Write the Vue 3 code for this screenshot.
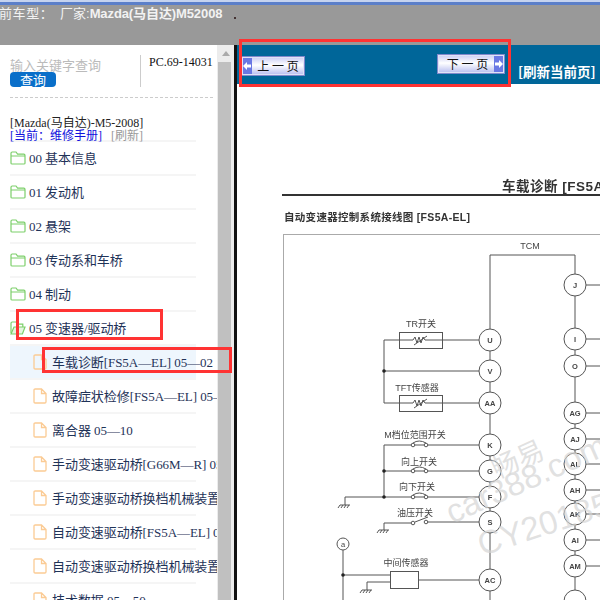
<script setup>
const tree = [
  { name: '00 基本信息', type: 'folder' },
  { name: '01 发动机', type: 'folder' },
  { name: '02 悬架', type: 'folder' },
  { name: '03 传动系和车桥', type: 'folder' },
  { name: '04 制动', type: 'folder' },
  { name: '05 变速器/驱动桥', type: 'open' },
  { name: '车载诊断[FS5A—EL] 05—02', type: 'file', active: true },
  { name: '故障症状检修[FS5A—EL] 05—03', type: 'file' },
  { name: '离合器 05—10', type: 'file' },
  { name: '手动变速驱动桥[G66M—R] 05—11', type: 'file' },
  { name: '手动变速驱动桥换档机械装置 05—15', type: 'file' },
  { name: '自动变速驱动桥[FS5A—EL] 05—17', type: 'file' },
  { name: '自动变速驱动桥换档机械装置 05—18', type: 'file' },
  { name: '技术数据 05—50', type: 'file' }
]

// 接线图的端子，坐标就是图上的位置
const pins = [
  ['J', 575, 285], ['I', 575, 339], ['O', 575, 366], ['AG', 575, 413], ['AJ', 575, 439],
  ['AL', 575, 464], ['AH', 575, 490], ['AK', 575, 514], ['AI', 575, 540], ['AM', 575, 566],
  ['', 575, 601],
  ['U', 490, 340], ['V', 490, 371], ['AA', 490, 403], ['K', 490, 445], ['G', 490, 471],
  ['F', 490, 497], ['S', 490, 522], ['AC', 490, 580]
]
const rightStubs = [285, 339, 366, 413, 439, 464, 490, 514, 540, 566]
const labels = [
  ['TCM', 530, 249], ['TR开关', 421, 327], ['TFT传感器', 417, 391], ['M档位范围开关', 415, 438],
  ['向上开关', 419, 465], ['向下开关', 417, 490], ['油压开关', 415, 516], ['中间传感器', 406, 566]
]
const nodes = [[384, 371], [384, 471], [384, 497], [343, 575]]
const grounds = [[345, 505], [384, 530], [367, 590]]
const contacts = [[413, 445], [426, 445], [413, 471], [426, 471], [413, 497], [426, 497], [413, 523], [426, 522]]
</script>

<template>
  <div class="page">
    <div class="top-bar">
      <span class="car-label">前车型：</span>
      <span class="car-maker">厂家:</span><b class="car-name">Mazda(马自达)M52008</b>
      <i class="top-dot"></i>
    </div>

    <div class="body">
      <aside class="side">
        <div class="search">
          <div class="search-left">
            <div class="search-hint">输入关键字查询</div>
            <button class="search-btn">查询</button>
          </div>
          <div class="pc-code">PC.69-14031</div>
        </div>
        <div class="car-title">[Mazda(马自达)-M5-2008]</div>
        <div class="crumb">
          <span class="crumb-now">[当前：维修手册]</span>
          <span class="crumb-refresh">[刷新]</span>
        </div>
        <ul class="tree">
          <li v-for="item in tree" :key="item.name" :class="['row', { sub: item.type === 'file', active: item.active }]">
            <svg v-if="item.type === 'folder'" class="ico-folder" viewBox="0 0 16 14">
              <path d="M1 12.2V2.2Q1 1 2.2 1H6l1.6 2.2h6.2Q15 3.2 15 4.4v7.8Q15 13 13.8 13H2.2Q1 13 1 12.2ZM1 5h14" />
            </svg>
            <svg v-else-if="item.type === 'open'" class="ico-folder" viewBox="0 0 16 14">
              <path d="M1 12V2.2Q1 1 2.2 1H6l1.6 2.2h5.2V6" />
              <path class="open-front" d="M1 13 4 6h11l-2.6 7Z" />
            </svg>
            <svg v-else class="ico-file" viewBox="0 0 14 16">
              <path d="M1 2.2Q1 1 2.2 1H8.5L13 5.5v8.3Q13 15 11.8 15H2.2Q1 15 1 13.8ZM8.5 1v4.5H13" />
            </svg>
            <span class="row-text">{{ item.name }}</span>
          </li>
        </ul>
      </aside>

      <div class="scrollbar">
        <i class="scroll-arrow"></i>
        <i class="scroll-thumb"></i>
      </div>

      <main class="main">
        <div class="nav">
          <button class="page-btn prev">
            <span class="cap"><svg viewBox="0 0 8 10"><path d="M0 5 4 1v2.4h4v3.2H4V9Z" /></svg></span>
            <span class="page-text">上 一 页</span>
          </button>
          <button class="page-btn next">
            <span class="page-text">下 一 页</span>
            <span class="cap"><svg viewBox="0 0 8 10"><path d="M8 5 4 1v2.4H0v3.2h4V9Z" /></svg></span>
          </button>
          <span class="reload">[刷新当前页]</span>
        </div>

        <svg class="sheet" viewBox="237 84 363 516">
          <g class="blurred">
            <text x="502" y="191" class="sheet-title">车载诊断 [FS5A-EL]</text>
            <rect x="282" y="194" width="330" height="2" fill="#333" />
            <text x="284" y="221" class="sheet-sub">自动变速器控制系统接线图 [FS5A-EL]</text>
            <rect x="283.5" y="234.5" width="340" height="400" fill="none" stroke="#aaa" />

            <g fill="none" stroke="#555">
              <path d="M490 329V255H575V600M490 340V600" />
              <path d="M479 340H384V403H479M384 371H479" />
              <path d="M479 445H384V497M384 471H479M345 497H479M345 497V505" />
              <path d="M479 522H426M413 523H384V530" />
              <path d="M343 550V600M343 575H390M390 582H367V590M418 580H479" />
              <path v-for="y in rightStubs" :key="y" :d="`M586 ${y}H600`" />
              <rect x="399.5" y="332.5" width="43" height="16" fill="#fff" />
              <rect x="399.5" y="395.5" width="43" height="16" fill="#fff" />
              <path d="M399 340H413l2-3 2 6 2-6 2 6 2-6 2 3H443M414 345l13-9M399 403H413l2-3 2 6 2-6 2 6 2-6 2 3H443M414 408l13-9" />
              <rect x="390.5" y="571.5" width="28" height="17" fill="#fff" />
              <path d="M413 443Q419 439 426 443M413 469Q419 465 426 469M413 495Q419 491 426 495M415 522 428 517" />
              <circle cx="343" cy="544" r="6" fill="#fff" />
              <path v-for="g in grounds" :key="g[0]" :d="`M${g[0] - 5} ${g[1]}h10m-10 0-2 3m5-3-2 3m5-3-2 3m5-3-2 3`" />
            </g>

            <circle v-for="c in contacts" :key="`${c[0]}-${c[1]}`" :cx="c[0]" :cy="c[1]" r="1.8" fill="#fff" stroke="#555" />
            <circle v-for="n in nodes" :key="`${n[0]}-${n[1]}`" :cx="n[0]" :cy="n[1]" r="1.8" fill="#222" />

            <g v-for="p in pins" :key="`${p[0]}-${p[2]}`">
              <circle :cx="p[1]" :cy="p[2]" r="11" fill="#fff" stroke="#555" />
              <text :x="p[1]" :y="p[2] + 3" class="pin">{{ p[0] }}</text>
            </g>
            <text x="343" y="547" class="pin small">a</text>
            <text v-for="l in labels" :key="l[0]" :x="l[1]" :y="l[2]" class="wire-label">{{ l[0] }}</text>
          </g>

          <g class="mark">
            <text transform="translate(497 479) rotate(-24)" class="mark-cn">畅易</text>
            <text transform="translate(452 524) rotate(-24)">car388.com</text>
            <text transform="translate(482 556) rotate(-18)">CY20185</text>
          </g>
        </svg>
      </main>
    </div>

    <i class="flag flag-nav"></i>
    <i class="flag flag-group"></i>
    <i class="flag flag-item"></i>
  </div>
</template>

<style>
html, body { margin: 0; background: #fff; }
</style>

<style scoped>
.page {
  position: relative;
  width: 600px;
  height: 600px;
  overflow: hidden;
  display: flex;
  flex-direction: column;
  font-family: "Liberation Serif", "Noto Sans CJK SC", serif;
}

.top-bar {
  flex: none;
  background: #999;
  border-top: 2px solid #c5d3ef;
  box-shadow: inset 0 3px 0 #5b7fc9;
  height: 43px;
  display: flex;
  align-items: flex-start;
  color: #f2f2f2;
  font-family: "Liberation Sans", "Noto Sans CJK SC", sans-serif;
  font-size: 13px;
  line-height: 24px;
  white-space: nowrap;
}
.car-label { margin-left: -1px; width: 61px; letter-spacing: 0.6px; }
.car-name { letter-spacing: -0.1px; font-weight: 600; }
.top-dot { width: 2px; height: 2px; background: #433; margin: 15px 0 0 12px; }

.body { flex: 1; display: flex; min-height: 0; }

.side { width: 217px; flex: none; overflow: hidden; background: #fff; }
.search {
  margin: 10px 4px 0 10px;
  padding-bottom: 10px;
  height: 32px;
  display: flex;
  border-bottom: 1px dashed #ccc;
}
.search-left { width: 130px; border-right: 1px solid #ccc; }
.search-hint {
  margin-top: 2px;
  color: #bbb;
  font-size: 13px;
  line-height: 15px;
  font-family: "Noto Sans CJK SC", sans-serif;
}
.search-btn {
  display: block;
  width: 46px;
  height: 15px;
  padding: 0;
  border: none;
  border-radius: 4px;
  background: #0a6fc9;
  color: #fff;
  font-family: "Noto Sans CJK SC", sans-serif;
  font-size: 13px;
  line-height: 15px;
}
.pc-code { margin-left: 8px; font-size: 12px; line-height: 14px; color: #111; white-space: nowrap; }
.car-title { margin: 18px 0 0 10px; font-size: 12px; line-height: 14px; color: #222; white-space: nowrap; }
.crumb { margin-left: 10px; font-size: 12px; line-height: 13px; white-space: nowrap; }
.crumb-now { color: #11d; }
.crumb-refresh { margin-left: 9px; color: #999; }

.tree { list-style: none; margin: -3px 0 0; padding: 0; width: 196px; }
.row {
  width: 186px;
  margin-left: 10px;
  height: 34px;
  box-sizing: border-box;
  border-top: 2px solid #f5f5f5;
  display: flex;
  align-items: center;
  white-space: nowrap;
  color: #1f3358;
  font-size: 13px;
  letter-spacing: -0.06px;
}
.row.sub { padding-left: 23px; }
.row.active { background: #eef6fd; }
.row-text { margin: 0 0 2px 3px; }
.sub .row-text { margin-left: 5px; }

.ico-folder { width: 16px; height: 14px; flex: none; fill: none; stroke: #7ccf6a; stroke-width: 1.2; }
.open-front { fill: #7ccf6a; fill-opacity: 0.2; }
.ico-file { width: 14px; height: 16px; flex: none; fill: none; stroke: #fbcb94; stroke-width: 1.3; }

.scrollbar {
  width: 20px;
  flex: none;
  box-sizing: border-box;
  background: #ececec;
  border-right: 3px solid #111;
  display: flex;
  flex-direction: column;
  align-items: flex-start;
}
.scroll-arrow {
  margin: 6px 0 0 5px;
  border-left: 4px solid transparent;
  border-right: 4px solid transparent;
  border-bottom: 5px solid #aaa;
}
.scroll-thumb { width: 13px; flex: 1; margin: 6px 0 0 1px; background: #c0c0c0; }

.main { flex: 1; min-width: 0; display: flex; flex-direction: column; background: #fff; }
.nav {
  height: 39px;
  flex: none;
  background: #006699;
  display: flex;
  align-items: flex-start;
  padding-left: 4px;
}
.page-btn {
  height: 20px;
  padding: 0;
  box-sizing: border-box;
  display: flex;
  align-items: stretch;
  border: 1px solid #8088cc;
  outline: 1px solid #dfe2f6;
  outline-offset: -2px;
  background: linear-gradient(#c8ccf4, #fff 45%, #b6bcf0);
  color: #111;
  font-family: "Noto Sans CJK SC", sans-serif;
  font-size: 12px;
}
.prev { width: 64px; margin-top: 11px; }
.next { width: 68px; margin: 9px 0 0 132px; }
.next .page-text { padding-left: 3px; }
.cap { width: 10px; flex: none; background: #6a78e4; display: flex; align-items: center; justify-content: center; }
.cap svg { width: 8px; height: 10px; fill: #fff; }
.page-text { flex: 1; text-align: center; line-height: 18px; white-space: nowrap; }
.reload {
  margin: 16px 0 0 13px;
  color: #fff;
  font-family: "Noto Sans CJK SC", sans-serif;
  font-size: 13.5px;
  font-weight: 700;
  line-height: 20px;
  white-space: nowrap;
}

.sheet { width: 363px; height: 516px; display: block; flex: none; }
.blurred { filter: blur(0.5px); }
.sheet text { font-family: "Liberation Sans", "Noto Sans CJK SC", sans-serif; }
.sheet-title { font-size: 13.5px; font-weight: 700; fill: #333; letter-spacing: 0.5px; }
.sheet-sub { font-size: 10.5px; font-weight: 700; fill: #333; letter-spacing: 0.3px; }
.pin { font-size: 7.5px; font-weight: 700; fill: #444; text-anchor: middle; }
.pin.small { font-weight: 400; }
.wire-label { font-size: 9px; fill: #444; text-anchor: middle; }
.mark text { font-size: 33px; fill: #d4d4d4; fill-opacity: 0.7; }
.mark .mark-cn { font-size: 27px; }

.flag { position: absolute; box-sizing: border-box; border: 3px solid #f33; pointer-events: none; }
.flag-nav { left: 239px; top: 39px; width: 272px; height: 48px; }
.flag-group { left: 16px; top: 309px; width: 147px; height: 31px; }
.flag-item { left: 42px; top: 347px; width: 190px; height: 26px; }
</style>
